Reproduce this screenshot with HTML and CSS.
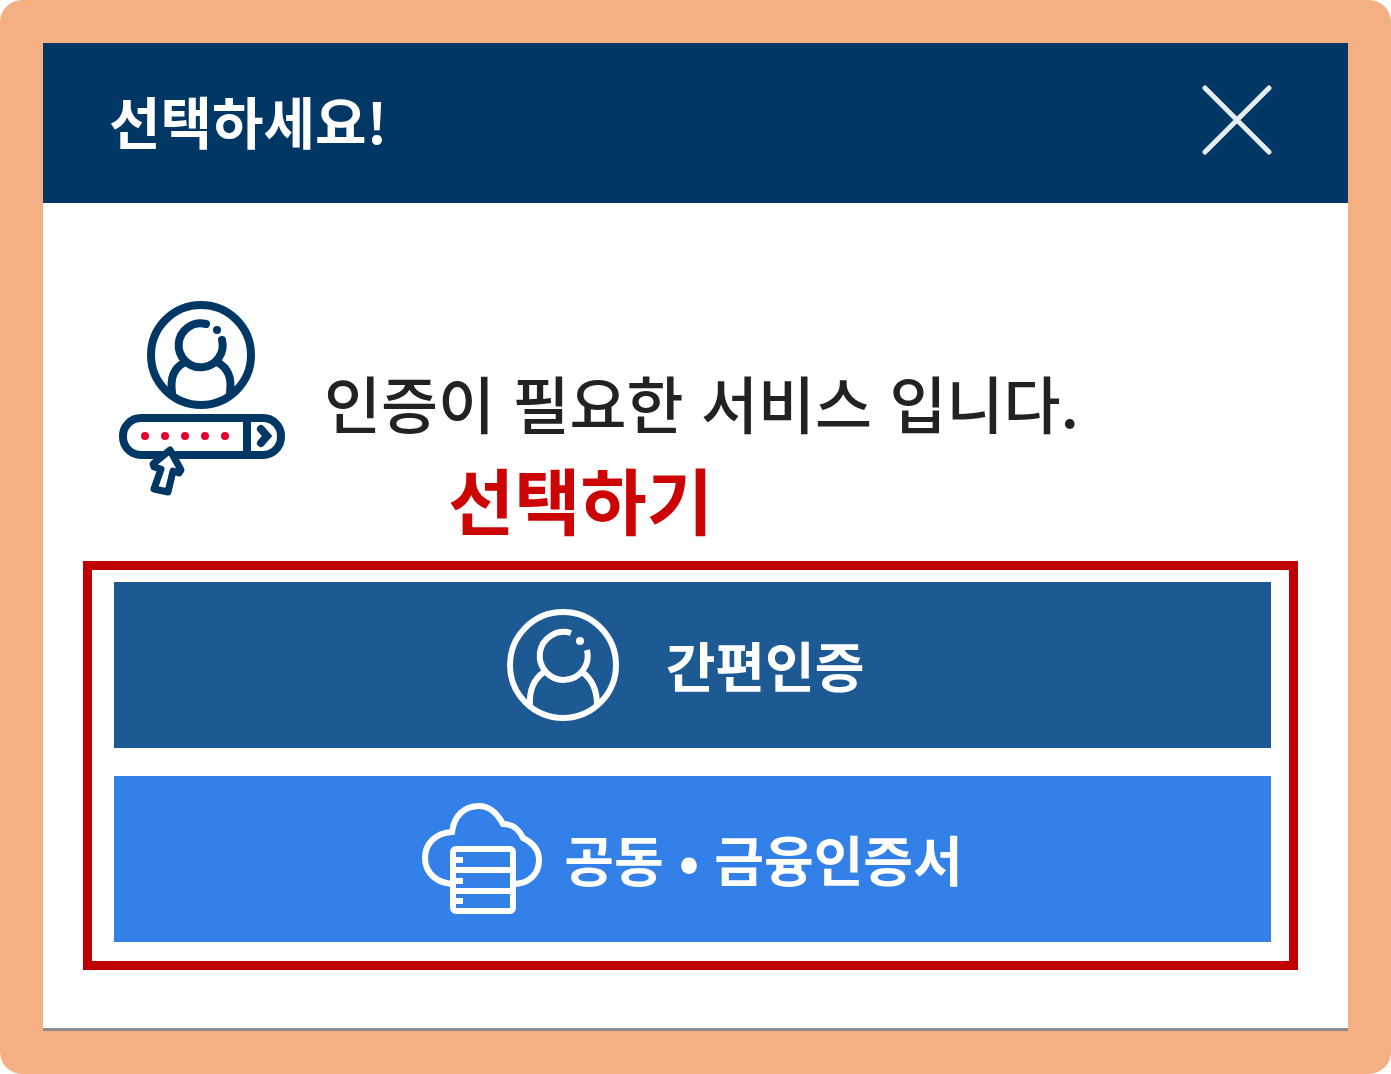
FILE: index.html
```html
<!DOCTYPE html>
<html lang="ko">
<head>
  <meta charset="UTF-8">
  <meta name="viewport" content="width=device-width, initial-scale=1">
  <title>선택하세요!</title>
  <link rel="stylesheet" href="styles.css">
</head>
<body>
  <div class="frame">
    <main class="dialog">
      <header class="dialog-header">
        <h1>선택하세요!</h1>
        <button class="close" type="button" aria-label="닫기">
          <svg width="72" height="72" viewBox="0 0 72 72">
            <path d="M4 4L68 68M68 4L4 68" />
          </svg>
        </button>
      </header>

      <div class="dialog-body">
        <section class="notice">
          <svg class="notice-icon" width="166" height="196" viewBox="0 0 166 196">
            <circle cx="82" cy="54" r="50" />
            <path d="M87 23A22 22 0 1 0 103 39" />
            <path d="M66 61C55 67 51 76 53 92M98 61C109 67 113 76 111 92" />
            <circle class="fill" cx="98" cy="29" r="4" />
            <rect x="4" y="117" width="158" height="37" rx="18" />
            <path d="M128 117V154" />
            <path d="M142 128L148 135L142 142" />
            <g class="dots">
              <circle cx="26" cy="135" r="4" />
              <circle cx="46" cy="135" r="4" />
              <circle cx="66" cy="135" r="4" />
              <circle cx="86" cy="135" r="4" />
              <circle cx="106" cy="135" r="4" />
            </g>
            <path class="cursor" d="M51 149L34 163L35 166L42 168L35 188L49 191L54 170L60 172L62 169Z" />
          </svg>
          <div class="notice-text">
            <p class="message">인증이 필요한 서비스 입니다.</p>
            <p class="hint">선택하기</p>
          </div>
        </section>

        <div class="choices">
          <button class="choice simple" type="button">
            <svg width="112" height="112" viewBox="0 0 112 112">
              <circle cx="56" cy="56" r="53" />
              <path d="M64 24A24 24 0 1 0 80 41" />
              <path d="M37 63C27 70 22 80 23 96M75 63C85 70 90 80 90 96" />
              <circle class="fill" cx="73" cy="32" r="4" />
            </svg>
            <span>간편인증</span>
          </button>
          <button class="choice cert" type="button">
            <svg width="120" height="112" viewBox="0 0 120 112">
              <path d="M33 81C15 81 3 70 3 55C3 40 14 30 30 29C32 13 42 3 57 3C68 3 75 10 81 21C91 21 97 26 101 35C111 40 117 47 117 57C117 71 107 81 91 81" />
              <rect x="31" y="46" width="60" height="62" rx="3" />
              <path d="M31 67H91M31 88H91M31 57H41M31 78H41M31 98H41" />
            </svg>
            <span>공동 • 금융인증서</span>
          </button>
        </div>
      </div>
    </main>
  </div>
</body>
</html>
```

FILE: styles.css
```css
* {
  box-sizing: border-box;
}

body {
  margin: 0;
  background: #fff;
  font-family: "Noto Sans CJK KR", sans-serif;
}

h1,
p {
  margin: 0;
}

svg {
  flex: none;
  fill: none;
  stroke: currentColor;
  stroke-width: 6;
}

svg .fill {
  fill: currentColor;
  stroke: none;
}

button {
  border: none;
  font-family: inherit;
  color: #fff;
  cursor: pointer;
}

.frame {
  padding: 43px;
  background: #f4b083;
  border-radius: 22px;
}

.dialog {
  background: #fff;
  border-bottom: 3px solid #8c8c8c;
}

.dialog-header {
  display: flex;
  justify-content: space-between;
  align-items: center;
  height: 160px;
  padding: 0 75px 6px 66px;
  background: #003764;
  color: #fff;
}

.dialog-header h1 {
  font-size: 56px;
  line-height: 80px;
  font-weight: 700;
}

.close {
  display: flex;
  padding: 0;
  background: none;
}

.close svg {
  stroke: #e6ebf0;
  stroke-width: 5;
  stroke-linecap: round;
}

.dialog-body {
  padding: 98px 50px 58px 40px;
}

.notice {
  display: flex;
  gap: 39px;
  padding-left: 36px;
}

.notice-icon {
  color: #003764;
  stroke-width: 8;
  stroke-linecap: round;
}

.dots {
  fill: #e60032;
  stroke: none;
}

.cursor {
  fill: #fff;
  stroke-width: 7;
  stroke-linejoin: round;
}

.notice-text {
  padding-top: 53px;
  line-height: 96px;
}

.message {
  font-size: 62px;
  font-weight: 500;
  color: #222;
}

.hint {
  padding-left: 124px;
  font-size: 72px;
  font-weight: 700;
  color: #cc0404;
}

.choices {
  display: flex;
  flex-direction: column;
  gap: 28px;
  margin-top: 15px;
  padding: 12px 18px 19px 22px;
  border: 9px solid #c00000;
}

.choice {
  display: flex;
  justify-content: center;
  align-items: center;
  gap: 22px;
  min-height: 166px;
  padding: 0;
  font-size: 54px;
  line-height: 80px;
  font-weight: 700;
}

.simple {
  gap: 47px;
  padding-right: 14px;
  background: #1d5a93;
}

.cert {
  background: #3381e8;
}
```
